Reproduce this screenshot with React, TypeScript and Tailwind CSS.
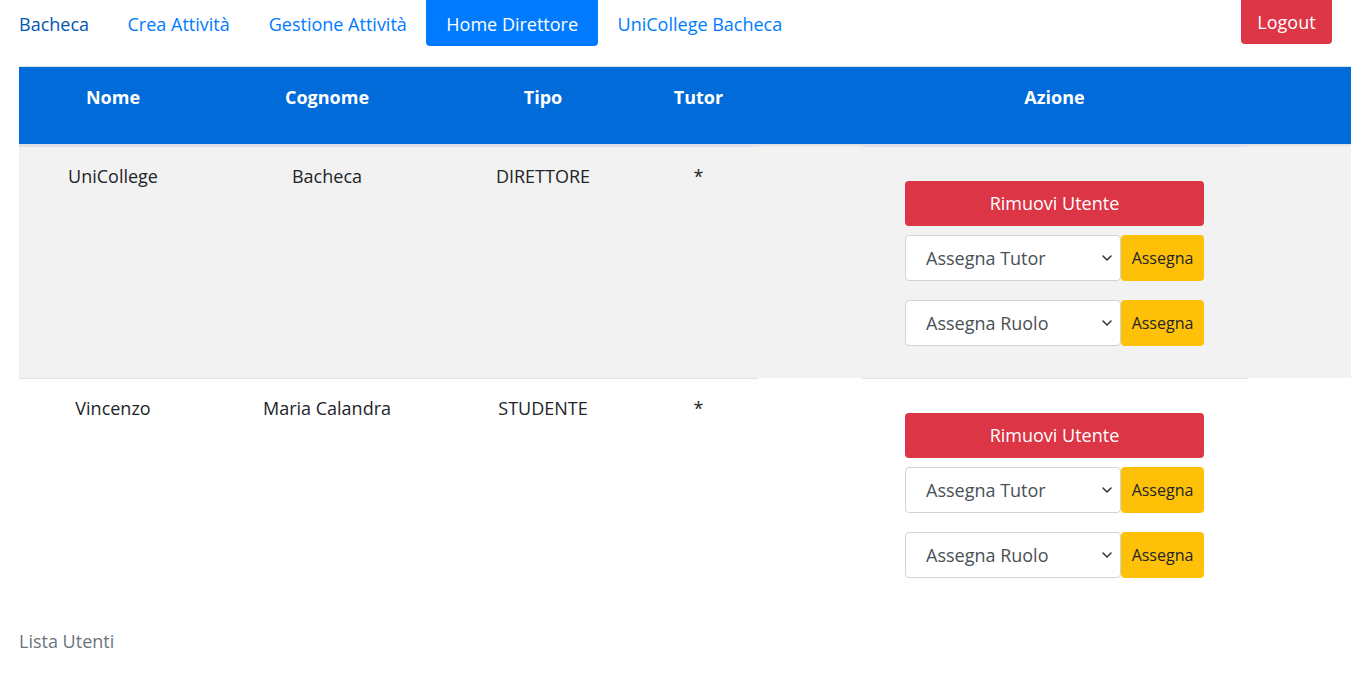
const utenti = [
    { nome: 'UniCollege', cognome: 'Bacheca', tipo: 'DIRETTORE', tutor: '*' },
    { nome: 'Vincenzo', cognome: 'Maria Calandra', tipo: 'STUDENTE', tutor: '*' },
]

function Chevron() {
    return (
        <svg className="pointer-events-none absolute right-[8px] top-1/2 h-[10px] w-[12px] -translate-y-1/2" viewBox="0 0 12 10" fill="none">
            <path d="M2 3l4 4 4-4" stroke="#343a40" strokeWidth="1.6" strokeLinecap="round" strokeLinejoin="round" />
        </svg>
    )
}

function SelectRow({ label }: { label: string }) {
    return (
        <div className="flex h-[46px]">
            <div className="relative h-full w-[216px]">
                <select className="h-full w-full appearance-none rounded-[4px] border border-[#ced4da] bg-white pl-[20px] text-[18px] text-[#495057] outline-none">
                    <option>{label}</option>
                </select>
                <Chevron />
            </div>
            <button className="h-full w-[83px] rounded-[4px] bg-[#ffc107] text-[16px] text-[#212529]">Assegna</button>
        </div>
    )
}

function Riga({ u, striped }: { u: (typeof utenti)[number]; striped: boolean }) {
    return (
        <div className={`grid grid-cols-[188px_240px_192px_119px_1fr] ${striped ? 'bg-[#f2f2f2]' : 'bg-white'}`}>
            <div className="border-t border-[#dee2e6] pt-[16px] text-center">{u.nome}</div>
            <div className="border-t border-[#dee2e6] pt-[16px] text-center">{u.cognome}</div>
            <div className="border-t border-[#dee2e6] pt-[16px] text-center">{u.tipo}</div>
            <div className="border-t border-[#dee2e6] pt-[16px] text-center">{u.tutor}</div>
            <div className="flex justify-center">
                <div className="flex w-[385px] flex-col items-center border-t border-[#dee2e6] pt-[34px] pb-[32px]">
                    <div className="flex w-[299px] flex-col">
                        <button className="h-[45px] rounded-[4px] bg-[#dc3545] text-[18px] text-white">Rimuovi Utente</button>
                        <div className="mt-[9px]">
                            <SelectRow label="Assegna Tutor" />
                        </div>
                        <div className="mt-[19px]">
                            <SelectRow label="Assegna Ruolo" />
                        </div>
                    </div>
                </div>
            </div>
        </div>
    )
}

export default function App() {
    return (
        <div className="min-h-[691px] bg-white font-['Open_Sans',sans-serif] text-[18px] leading-[27px] text-[#212529]">
            <nav className="flex h-[47px] items-start justify-between pr-[35px]">
                <div className="flex items-start">
                    <a className="px-[19px] pt-[11px] text-[#0056b3]">Bacheca</a>
                    <a className="px-[19.5px] pt-[11px] text-[#007bff]">Crea Attività</a>
                    <a className="px-[19.5px] pt-[11px] text-[#007bff]">Gestione Attività</a>
                    <a className="h-[46px] rounded-b-[4px] bg-[#007bff] px-[20px] pt-[11px] text-white">Home Direttore</a>
                    <a className="px-[19.5px] pt-[11px] text-[#007bff]">UniCollege Bacheca</a>
                </div>
                <button className="h-[44px] w-[91px] rounded-b-[4px] bg-[#dc3545] pt-[1px] text-[18px] text-white">Logout</button>
            </nav>

            <div className="ml-[19px] mr-[16px] mt-[19px] border-t border-[#dee2e6]">
                <div className="grid h-[79px] grid-cols-[188px_240px_192px_119px_1fr] border-b-2 border-[#dee2e6] bg-[#006bd9] pt-[17px] text-center font-bold text-white">
                    <div>Nome</div>
                    <div>Cognome</div>
                    <div>Tipo</div>
                    <div>Tutor</div>
                    <div>Azione</div>
                </div>
                {utenti.map((u, i) => (
                    <Riga key={u.nome} u={u} striped={i % 2 === 0} />
                ))}
                <p className="pt-[18px] text-[#6c757d]">Lista Utenti</p>
            </div>
        </div>
    )
}
